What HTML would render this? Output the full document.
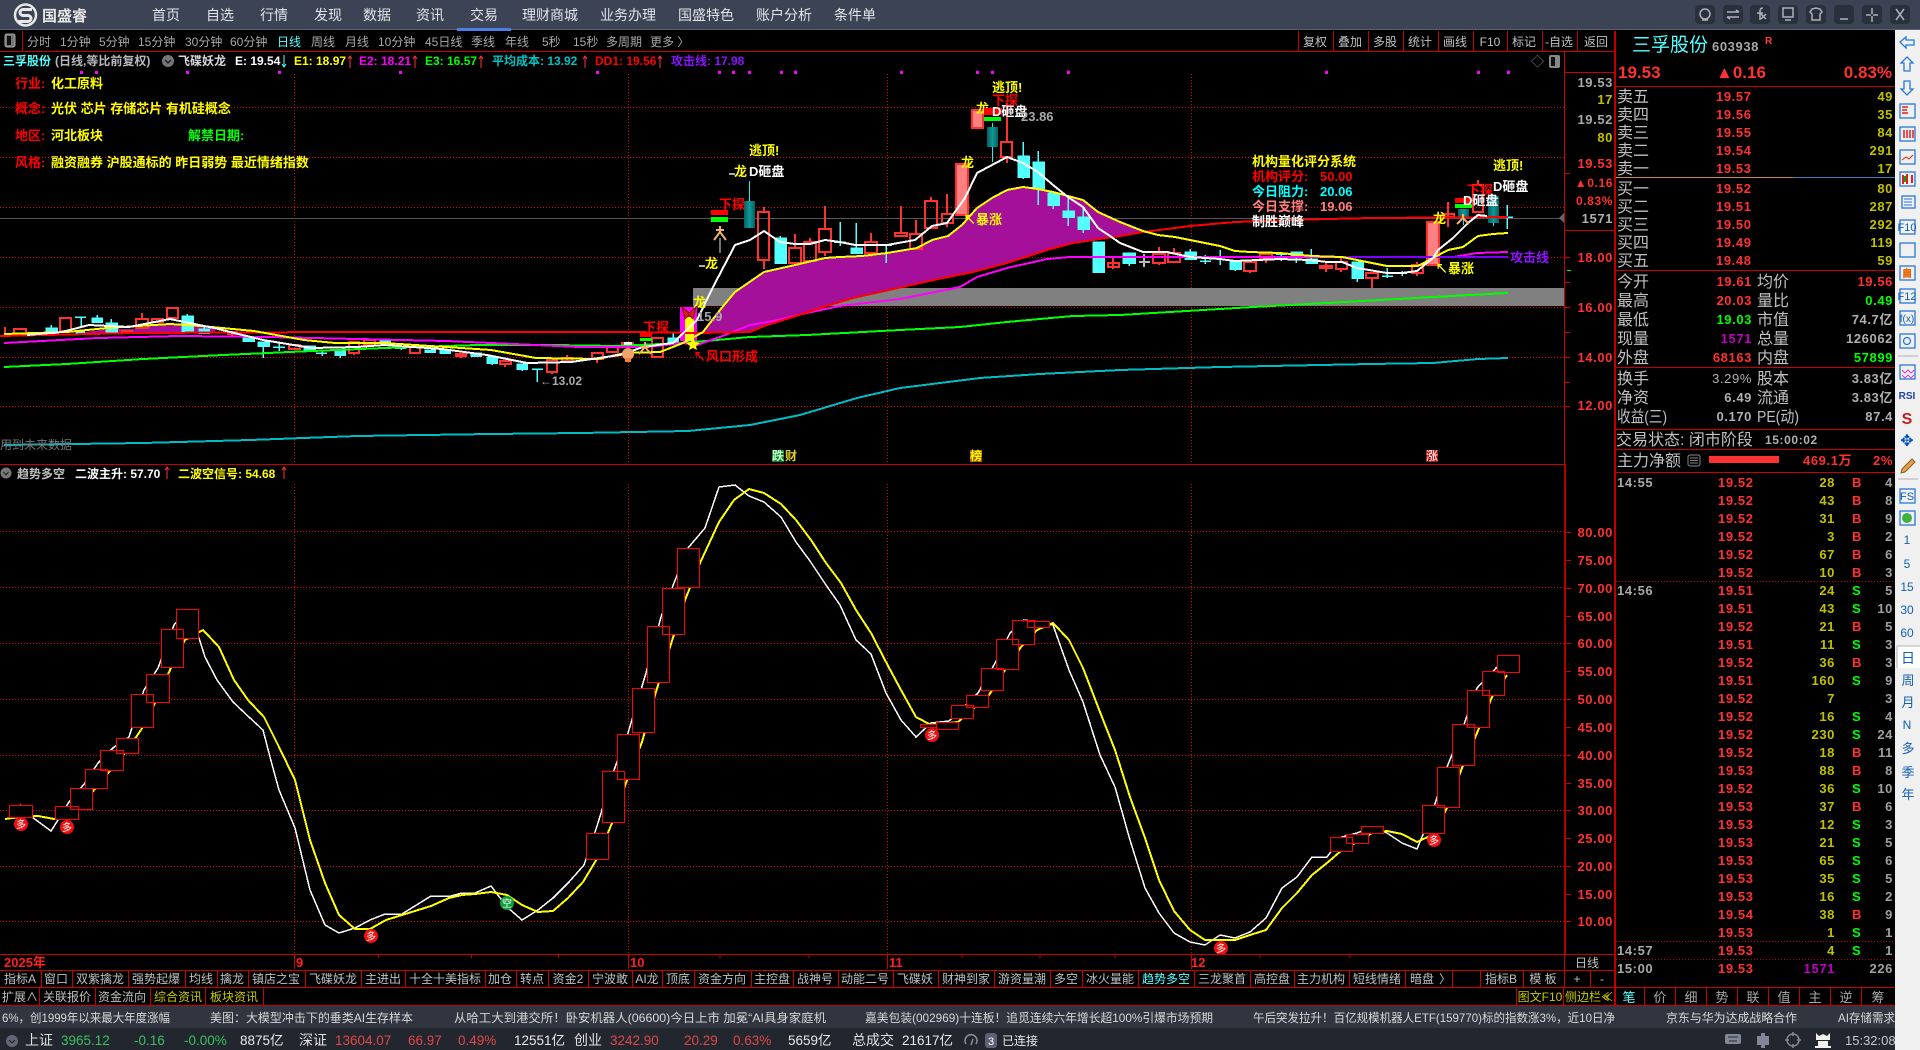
<!DOCTYPE html>
<html lang="zh-CN"><head><meta charset="utf-8"><title>国盛睿</title>
<style>
html,body{margin:0;padding:0;background:#000;width:1920px;height:1050px;overflow:hidden}
svg{display:block}
text{font-family:"Liberation Sans","WenQuanYi Zen Hei","Noto Sans CJK SC",sans-serif;font-size:12px;white-space:pre}
.d text,text.d{font-size:13px;font-weight:bold;letter-spacing:.6px}
.l text{font-size:16px;fill:#c0c0c0}
.b text,text.b{font-weight:bold}
.m text{text-anchor:middle}
.e text{text-anchor:end}
.tag text{font-size:13px;font-weight:bold}
</style></head><body>
<svg xmlns="http://www.w3.org/2000/svg" width="1920" height="1050" viewBox="0 0 1920 1050">
<rect width="1920" height="1050" fill="#000"/>

<!-- title bar -->
<rect width="1920" height="30" fill="#3c4354"/>
<rect y="29" width="1920" height="1" fill="#59606f"/>
<rect x="457" y="28" width="54" height="3" fill="#4d7fe8"/>
<g fill="none" stroke="#e8e8e8"><circle cx="25.5" cy="15" r="10.5" stroke-width="2.5"/><path d="M32 9.5H23a3 3 0 0 0 0 6h5a3 3 0 0 1 0 6H18" stroke-width="3"/></g>
<text x="42" y="21" font-weight="bold" style="font-size:15px" fill="#e8e8e8">国盛睿</text>
<g fill="#e2e4e8" style="font-size:14px">
<text x="152" y="20" style="font-size:14px">首页</text><text x="206" y="20" style="font-size:14px">自选</text><text x="260" y="20" style="font-size:14px">行情</text><text x="314" y="20" style="font-size:14px">发现</text><text x="363" y="20" style="font-size:14px">数据</text><text x="416" y="20" style="font-size:14px">资讯</text><text x="470" y="20" style="font-size:14px">交易</text><text x="522" y="20" style="font-size:14px">理财商城</text><text x="600" y="20" style="font-size:14px">业务办理</text><text x="678" y="20" style="font-size:14px">国盛特色</text><text x="756" y="20" style="font-size:14px">账户分析</text><text x="834" y="20" style="font-size:14px">条件单</text>
</g>
<!-- window buttons -->
<g fill="#2a303c"><rect x="1695" y="5" width="20" height="19" rx="4"/><rect x="1723" y="5" width="20" height="19" rx="4"/><rect x="1750" y="5" width="20" height="19" rx="4"/><rect x="1778" y="5" width="20" height="19" rx="4"/><rect x="1806" y="5" width="20" height="19" rx="4"/><rect x="1834" y="5" width="20" height="19" rx="4"/><rect x="1862" y="5" width="20" height="19" rx="4"/><rect x="1890" y="5" width="20" height="19" rx="4"/></g>
<g fill="none" stroke="#aab0bc" stroke-width="1.5">
<circle cx="1705" cy="14" r="5"/><path d="M1702 20h6"/>
<path d="M1727 12h12M1736 10l3 2M1739 17h-12M1730 19l-3-2"/>
<path d="M1763 8c-3 0-3 2-3 4v8M1757 13h6M1761 14l5 5M1766 14l-5 5"/>
<rect x="1783" y="8" width="10" height="9"/><path d="M1785 20h6"/>
<path d="M1812 9l4-1 4 1 2 3-2 2v6h-8v-6l-2-2z"/>
<path d="M1840 19h8"/>
<path d="M1872 8v6M1872 16v6M1866 15h5M1873 15h5"/>
<path d="M1896 9l8 11M1904 9l-8 11"/>
</g>

<!-- period toolbar -->
<rect x="5" y="34" width="10" height="13" rx="2" fill="#777" stroke="#aaa"/><rect x="7" y="36" width="4" height="9" fill="#111"/>
<rect x="22" y="31" width="1" height="20" fill="#c80000"/>
<g fill="#a8a8a8">
<text x="27" y="46">分时</text><text x="60" y="46">1分钟</text><text x="99" y="46">5分钟</text><text x="138" y="46">15分钟</text><text x="185" y="46">30分钟</text><text x="230" y="46">60分钟</text><text x="277" y="46" fill="#54ffff">日线</text><text x="311" y="46">周线</text><text x="345" y="46">月线</text><text x="378" y="46">10分钟</text><text x="425" y="46">45日线</text><text x="471" y="46">季线</text><text x="505" y="46">年线</text><text x="542" y="46">5秒</text><text x="573" y="46">15秒</text><text x="606" y="46">多周期</text><text x="650" y="46">更多 〉</text>
</g>
<g fill="#c0c0c0" class="m"><text x="1315" y="46">复权</text><text x="1350" y="46">叠加</text><text x="1385" y="46">多股</text><text x="1420" y="46">统计</text><text x="1455" y="46">画线</text><text x="1490" y="46">F10</text><text x="1524" y="46">标记</text><text x="1559" y="46">-自选</text><text x="1596" y="46">返回</text></g>
<path d="M1298.5 31V51M1333.5 31V51M1368.5 31V51M1403.5 31V51M1438.5 31V51M1473.5 31V51M1507.5 31V51M1542.5 31V51M1577.5 31V51" stroke="#c80000" shape-rendering="crispEdges"/>
<rect y="51" width="1615" height="1" fill="#c80000"/>

<!-- info row -->
<g style="font-size:12px">
<text x="3" y="65" fill="#54ffff" font-weight="bold">三孚股份</text><text x="55" y="65" fill="#b8b8b8" font-weight="bold">(日线,等比前复权)</text>
<circle cx="168" cy="61" r="6" fill="#777"/><path d="M165 60l3 3 3-3" stroke="#222" stroke-width="1.5" fill="none"/>
<text x="178" y="65" fill="#d8d8d8" font-weight="bold">飞碟妖龙</text>
<text x="235" y="65" fill="#fff" font-weight="bold">E: 19.54</text><path d="M284 55v11M282 64l2 3 2-3" stroke="#54ffff" fill="none"/>
<text x="294" y="65" fill="#ff0" font-weight="bold">E1: 18.97</text><path d="M350 68V56M348 59l2-3 2 3" stroke="#ff3232" fill="none"/>
<text x="359" y="65" fill="#f0f" font-weight="bold">E2: 18.21</text><path d="M415 68V56M413 59l2-3 2 3" stroke="#ff3232" fill="none"/>
<text x="425" y="65" fill="#0f0" font-weight="bold">E3: 16.57</text><path d="M481 68V56M479 59l2-3 2 3" stroke="#ff3232" fill="none"/>
<text x="492" y="65" fill="#00c4c4" font-weight="bold">平均成本: 13.92</text><path d="M585 68V56M583 59l2-3 2 3" stroke="#ff3232" fill="none"/>
<text x="595" y="65" fill="#f00" font-weight="bold">DD1: 19.56</text><path d="M660 68V56M658 59l2-3 2 3" stroke="#ff3232" fill="none"/>
<text x="671" y="65" fill="#8a14ff" font-weight="bold">攻击线: 17.98</text>
</g>
<text x="1531" y="66" fill="#888" style="font-size:13px">◇</text>
<rect x="1549" y="55" width="11" height="13" rx="2" fill="#888"/><rect x="1551" y="57" width="4" height="9" fill="#111"/>
<!-- magenta marks -->
<path d="M80 71h3v3h-3zM95 71h3v3h-3zM186 71h3v3h-3zM278 71h3v3h-3zM399 71h3v3h-3zM596 71h3v3h-3zM718 71h3v3h-3zM732 71h3v3h-3zM748 71h3v3h-3zM780 71h3v3h-3zM794 71h3v3h-3zM900 71h3v3h-3zM976 71h3v3h-3zM991 71h3v3h-3zM1067 71h3v3h-3zM1325 71h3v3h-3zM1477 71h3v3h-3zM1507 71h3v3h-3z" fill="#f0f"/>

<!-- grid -->
<g stroke="#e00000" stroke-dasharray="1 2" shape-rendering="crispEdges">
<path d="M0 107.5H1564M0 157.5H1564M0 207.5H1564M0 257.5H1564M0 307.5H1564M0 357.5H1564M0 406.5H1564"/>
<path d="M294.5 74V464M628.5 74V464M887.5 74V464M1191.5 74V464"/>
<path d="M0 531.5H1564M0 587.5H1564M0 643.5H1564M0 699.5H1564M0 755.5H1564M0 810.5H1564M0 866.5H1564M0 921.5H1564"/>
<path d="M294.5 484V954M628.5 484V954M887.5 484V954M1191.5 484V954"/>
</g>

<!-- band and gray line -->
<rect x="693" y="288" width="871" height="18" fill="#808080"/>
<rect x="0" y="218" width="1560" height="1" fill="#555"/>
<path d="M1564 213l-5 5 5 5z" fill="#666"/>

<!-- purple fills -->
<polygon fill="#a4109a" points="703,332 720,310 735,292 764,272 795,265 825,258 840,257 862,256 887,253 917,248 932,240 948,236 962,225 977,208 992,198 1007,190 1023,187 1038,189 1053,192 1068,196 1083,200 1098,212 1120,221 1147,232 1120,236 1073,243 1047,250 1007,263 973,272 943,278 898,288 853,298 823,307 793,317 767,325 750,332"/>
<polygon fill="#a4109a" points="71,334 107,329 135,329 170,323 201,326 215,329 215,333"/>

<!-- candles red hollow -->
<path fill="none" stroke="#ff3232" stroke-width="2" shape-rendering="crispEdges" d="M5 327V337M14 329H26V334H14ZM60 318H71V331H60ZM136 319H148V328H136ZM142 313V319M152 319H163V322H152ZM167 308H178V318H167ZM228 332H237V334H228ZM232 334V337M289 345H300V349H289ZM349 342H359V353H349ZM354 353V355M364 340H375V345H364ZM410 347H420V353H410ZM456 354H466V356H456ZM461 356V358M500 361H511V364H500ZM505 364V367M547 360H557V372H547ZM552 372V374M562 358H572V361H562ZM567 355V363M592 353H603V359H592ZM597 359V363M607 347H618V352H607ZM652 338H663V357H652Z
M758 212H769V260H758ZM764 207V212M764 260V269M789 248H801V263H789ZM795 234V248M804 242H816V261H804ZM810 238V242M819 229H831V252H819ZM825 206V229M825 252V256M865 242H877V253H865ZM871 233V242M871 253V257M895 233H907V236H895ZM901 206V233M910 234H922V249H910ZM916 220V234M925 201H937V228H925ZM931 197V201M942 214H953V223H942ZM947 194V214M947 223V227M1001 142H1012V157H1001ZM1007 103V142M1007 157V163M1108 263H1119V267H1108ZM1113 258V269
M1153 254H1165V263H1153ZM1159 247V254M1159 263V265M1168 253H1180V262H1168ZM1174 248V253M1244 262H1256V271H1244ZM1250 271V273M1260 254H1272V258H1260ZM1266 258V263M1320 266H1332V268H1320ZM1326 262V272M1336 262H1347V269H1336ZM1341 257V262M1341 269V272M1366 273H1378V278H1366ZM1372 278V288M1412 265H1423V273H1412ZM1417 262V265M1417 273V276M1443 214H1454V217H1443ZM1448 202V227M1473 185H1483V212H1473ZM1478 180V185"/>
<path fill="#ff3232" d="M121 330h12v4h-12zM621 342h13v4h-13z"/>
<!-- salmon -->
<g fill="#ff8080" stroke="#ff3232" stroke-width="2" shape-rendering="crispEdges"><rect x="956" y="164" width="12" height="51"/><rect x="972" y="110" width="11" height="18"/><rect x="1427" y="222" width="12" height="43"/></g>
<!-- cyan candles -->
<path fill="#54ffff" stroke="#54ffff" stroke-width="1.5" shape-rendering="crispEdges" d="M46 328h11v5h-11zM51 325v8M76 331h8v2h-8zM81 317V327M75 317h11M92 318h10v4h-10zM97 315v8M106 323h11v10h-11zM111 319v4M182 316h11v16h-11zM187 314v2M199 329h10v4h-10zM204 327v2M243 337h11v4h-11zM258 342h11v4h-11zM263 346V358M273 347h12M279 343V351M304 346h11v4h-11zM316 353h11M322 350V356M335 350h10v5h-10zM340 355V358M380 340h10v3h-10zM395 348h11M401 346V350M425 350h10v2h-10zM440 350h10v3h-10zM471 353h10v3h-10zM487 357h10v6h-10zM492 363V365M517 364h10v5h-10zM522 369V371M532 369h11M537 369V382M673 333V343M668 338h10v5h-10z
M775 238h11v25h-11zM780 236v2M840 222V246M834 242h12M851 248h11v5h-11zM856 223V248M881 245h11M886 245V263M1018 156h11v21h-11zM1023 142V156M1023 177V179M1033 162h11v26h-11zM1038 151V162M1038 188V205M1048 193h11v12h-11zM1053 205V209M1063 211h11v6h-11zM1068 198V211M1068 217V226M1078 217h11v12h-11zM1083 207V217M1083 229V233M1093 242h11v30h-11zM1098 272V273
M1123 253h12v10h-12zM1129 263V266M1185 252h11v7h-11zM1190 249V259M1200 261h11M1205 255V264M1215 257h10M1220 250V265M1230 262h11v7h-11zM1235 269V271M1276 254h11M1281 252V261M1291 252h11v5h-11zM1296 257V263M1306 259h11v4h-11zM1311 249V259M1352 262h11v16h-11zM1357 278V282M1382 276h11M1387 268V278M1397 273h10M1402 271V276M1502 217h11M1507 205V229"/>
<path stroke="#b8b8b8" stroke-width="2" d="M1139 262h11M1144 254v13" fill="none" shape-rendering="crispEdges"/>
<!-- teal -->
<defs><linearGradient id="t" x1="0" x2="1"><stop offset="0" stop-color="#0a5f5f"/><stop offset=".5" stop-color="#0f9a9a"/><stop offset="1" stop-color="#0a5f5f"/></linearGradient></defs>
<g fill="url(#t)"><rect x="744" y="201" width="11" height="27"/><rect x="987" y="127" width="11" height="20"/><rect x="1458" y="209" width="11" height="8"/><rect x="1488" y="196" width="11" height="27"/></g>
<path stroke="#2ee" stroke-width="1" d="M749.5 181V201M992.5 123V127M992.5 147V162M1463.5 217V225M1493.5 223V226" shape-rendering="crispEdges"/>
<!-- big signal bar -->
<rect x="680" y="307" width="17" height="34" fill="#f0f"/><rect x="685" y="317" width="9" height="24" fill="#ff0"/>

<!-- upper lines -->
<g fill="none" stroke-width="2" shape-rendering="crispEdges">
<polyline stroke="#00bcc4" points="4,445 143,443 250,440 357,436 491,434 580,433 688,431 750,425 800,415 857,398 900,388 980,378 1040,374 1120,370 1220,367 1370,364 1433,363 1478,359 1508,358"/>
<polyline stroke="#0f0" points="4,367 67,364 143,359 223,355 312,351 384,348 478,345 553,345 616,346 683,343 750,337 807,335 900,330 960,327 1007,322 1073,316 1120,315 1253,307 1327,303 1433,297 1508,293"/>
<polyline stroke="#f0f" points="4,343 98,338 179,336 268,337 446,341 491,343 580,347 647,347 683,343 697,345 720,337 750,325 773,321 807,313 840,306 900,299 960,287 977,277 1007,268 1047,259 1070,257 1120,257 1453,257 1477,253 1508,252"/>
<polyline stroke="#f00" points="0,336 134,333 339,332 629,332 697,333 750,332 767,325 793,317 823,307 853,298 898,288 943,278 973,272 1007,263 1047,250 1073,243 1120,236 1143,232 1167,229 1190,226 1235,222 1327,219 1373,218 1508,217"/>
<polyline stroke="#8000ff" points="1340,257 1508,257"/>
<polyline stroke="#ff0" points="4,334 67,332 107,328 170,324 201,326 254,331 304,340 335,343 384,343 446,347 491,350 536,358 598,359 625,353 660,352 683,343 703,332 720,310 735,292 764,272 795,265 825,258 840,257 862,256 887,253 917,248 932,240 948,236 962,225 977,208 992,198 1007,190 1023,187 1038,189 1053,192 1068,196 1083,200 1098,212 1120,222 1143,231 1158,235 1175,237 1220,246 1235,251 1250,252 1280,253 1312,256 1342,257 1372,263 1387,266 1418,266 1433,258 1448,250 1463,247 1478,236 1493,234 1508,233"/>
<polyline stroke="#fff" points="27,335 62,332 89,325 129,327 170,319 214,328 263,340 312,348 357,347 384,345 442,349 487,355 527,363 571,362 620,355 643,347 673,343 697,320 713,287 735,245 750,240 764,231 780,242 795,244 810,244 825,240 840,242 855,245 887,245 915,240 932,226 947,223 965,198 977,173 992,165 1007,157 1023,163 1038,172 1053,185 1068,197 1083,207 1098,228 1110,236 1120,243 1143,252 1167,252 1190,257 1220,259 1235,261 1280,259 1310,260 1327,262 1342,262 1357,268 1387,273 1402,273 1417,271 1433,258 1438,250 1453,238 1468,223 1478,215 1487,216"/>
</g>

<!-- upper annotations -->
<g class="tag">
<text x="15" y="88" fill="#f00">行业:</text><text x="51" y="88" fill="#ff0">化工原料</text>
<text x="15" y="113" fill="#f00">概念:</text><text x="51" y="113" fill="#ff0">光伏 芯片 存储芯片 有机硅概念</text>
<text x="15" y="140" fill="#f00">地区:</text><text x="51" y="140" fill="#ff0">河北板块</text><text x="188" y="140" fill="#0f0">解禁日期:</text>
<text x="15" y="167" fill="#f00">风格:</text><text x="51" y="167" fill="#ff0">融资融券 沪股通标的 昨日弱势 最近情绪指数</text>

<text x="749" y="155" fill="#ff0">逃顶!</text><text x="992" y="92" fill="#ff0">逃顶!</text><text x="1493" y="170" fill="#ff0">逃顶!</text>
<text x="734" y="176" fill="#ff0">龙</text><text x="705" y="268" fill="#ff0">龙</text><text x="693" y="307" fill="#ff0">龙</text><text x="976" y="113" fill="#ff0">龙</text><text x="961" y="167" fill="#ff0">龙</text><text x="1433" y="223" fill="#ff0">龙</text>
<text x="719" y="209" fill="#f00">下探</text><text x="643" y="332" fill="#f00">下探</text><text x="992" y="105" fill="#f00">下探</text><text x="1467" y="195" fill="#f00">下探</text>
</g>
<path d="M729 174h6M699 266h6" stroke="#aaa" stroke-width="2"/>
<g fill="#f00"><rect x="711" y="210" width="17" height="5"/><rect x="640" y="332" width="12" height="5"/><rect x="984" y="108" width="18" height="7"/><rect x="1455" y="198" width="17" height="5"/></g>
<g fill="#0f0"><rect x="711" y="217" width="17" height="5"/><rect x="640" y="338" width="12" height="3"/><rect x="984" y="117" width="17" height="4"/><rect x="1455" y="204" width="17" height="4"/></g>
<g class="tag">
<text x="749" y="176" fill="#fff">D砸盘</text><text x="992" y="116" fill="#fff">D砸盘</text><text x="1493" y="191" fill="#fff">D砸盘</text><text x="1463" y="205" fill="#fff">D砸盘</text>
<text x="1021" y="121" fill="#aaa">23.86</text><text x="697" y="321" fill="#aaa">15.9</text><text x="540" y="385" fill="#aaa" style="font-size:12px">←13.02</text>
<text x="693" y="361" fill="#f00">↖风口形成</text>
<text x="963" y="224" fill="#ff0">↖暴涨</text><text x="1435" y="273" fill="#ff0">↖暴涨</text>
<text x="1252" y="166" fill="#ff0">机构量化评分系统</text>
<text x="1252" y="181" fill="#f00">机构评分:</text><text x="1320" y="181" fill="#f00">50.00</text>
<text x="1252" y="196" fill="#0ff">今日阻力:</text><text x="1320" y="196" fill="#0ff">20.06</text>
<text x="1252" y="211" fill="#ff8080">今日支撑:</text><text x="1320" y="211" fill="#ff8080">19.06</text>
<text x="1252" y="226" fill="#fff">制胜巅峰</text>
<text x="1510" y="262" fill="#8a14ff">攻击线</text>
</g>
<text x="0" y="449" fill="#777">用到未来数据</text>
<!-- persons, butterfly, star, bag -->
<g fill="none" stroke="#f0b070" stroke-width="2"><path d="M720 226v6M714 240l6-8 6 8M716 230h8"/><path d="M645 342v6M639 354l6-7 6 7M641 347h8"/><path d="M1463 214v5M1457 224l6-6 6 6"/></g>
<path d="M720 238v15" stroke="#999" stroke-width="1.5"/>
<path d="M682 307l7 6 7-6-3 12-4-4-4 4z" fill="#d02020" stroke="#801010"/>
<polygon points="693,337 695,342 700,343 696,346 697,350 693,348 689,350 690,346 686,343 691,342" fill="#ff0"/>
<circle cx="628" cy="354" r="6" fill="#f2a468"/><rect x="624" y="342" width="8" height="3" fill="#fff"/><rect x="625" y="358" width="6" height="4" fill="#f2803a"/>
<!-- upper bottom tags -->
<g class="b"><rect x="772" y="450" width="12" height="12" fill="#0a7a2a"/><text x="772" y="460" fill="#cfc">跌</text><text x="785" y="460" fill="#ddd020">财</text><rect x="970" y="450" width="12" height="12" fill="#b05a00"/><text x="970" y="460" fill="#ff0">榜</text><rect x="1426" y="450" width="12" height="12" fill="#a01010"/><text x="1426" y="460" fill="#fcc">涨</text></g>

<!-- axis -->
<rect x="1564" y="52" width="1" height="412" fill="#c80000"/><rect x="1564" y="464" width="2" height="490" fill="#b00000"/>
<rect x="1564" y="72" width="51" height="1" fill="#c80000"/><rect x="1564" y="230" width="51" height="1" fill="#c80000"/>
<path d="M1565 173.500h5M1565 257.500h5M1565 282.500h5M1565 307.500h5M1565 332.500h5M1565 357.500h5M1565 382.500h5M1565 406.500h5" stroke="#c80000" shape-rendering="crispEdges"/>
<path d="M1567 270.500h4" stroke="#0f0" shape-rendering="crispEdges"/>
<g class="d e">
<text x="1613" y="87" fill="#a8a8a8">19.53</text><text x="1613" y="104" fill="#c0c000">17</text><text x="1613" y="124" fill="#a8a8a8">19.52</text><text x="1613" y="142" fill="#c0c000">80</text><text x="1613" y="168" fill="#ff3232">19.53</text><text x="1613" y="187" fill="#ff3232" style="font-size:12px">▲0.16</text><text x="1613" y="205" fill="#ff3232" style="font-size:12px">0.83%</text><text x="1613" y="223" fill="#b0b0b0">1571</text>
<text x="1613" y="262" fill="#ff3232">18.00</text><text x="1613" y="312" fill="#ff3232">16.00</text><text x="1613" y="362" fill="#ff3232">14.00</text><text x="1613" y="410" fill="#ff3232">12.00</text>
</g>
<g class="d e">
<text x="1613" y="926" fill="#ff3232">10.00</text><text x="1613" y="899" fill="#ff3232">15.00</text><text x="1613" y="871" fill="#ff3232">20.00</text><text x="1613" y="843" fill="#ff3232">25.00</text><text x="1613" y="815" fill="#ff3232">30.00</text><text x="1613" y="788" fill="#ff3232">35.00</text><text x="1613" y="760" fill="#ff3232">40.00</text><text x="1613" y="732" fill="#ff3232">45.00</text><text x="1613" y="704" fill="#ff3232">50.00</text><text x="1613" y="676" fill="#ff3232">55.00</text><text x="1613" y="648" fill="#ff3232">60.00</text><text x="1613" y="621" fill="#ff3232">65.00</text><text x="1613" y="593" fill="#ff3232">70.00</text><text x="1613" y="565" fill="#ff3232">75.00</text><text x="1613" y="537" fill="#ff3232">80.00</text>
</g>
<path d="M1566 921.500h5M1566 894.500h5M1566 866.500h5M1566 838.500h5M1566 810.500h5M1566 783.500h5M1566 755.500h5M1566 727.500h5M1566 699.500h5M1566 671.500h5M1566 643.500h5M1566 616.500h5M1566 588.500h5M1566 560.500h5M1566 532.500h5" stroke="#c80000" shape-rendering="crispEdges"/>

<!-- lower pane header -->
<rect y="464" width="1564" height="1" fill="#c80000"/>
<circle cx="6" cy="473" r="5.500" fill="#777"/><path d="M3.500 472l2.500 3 2.500-3" stroke="#222" fill="none"/>
<text x="17" y="478" fill="#c0c0c0" font-weight="bold">趋势多空</text>
<text x="75" y="478" fill="#fff" font-weight="bold">二波主升: 57.70</text><path d="M167 479V467M165 470l2-3 2 3" stroke="#ff3232" fill="none"/>
<text x="178" y="478" fill="#ff0" font-weight="bold">二波空信号: 54.68</text><path d="M284 479V467M282 470l2-3 2 3" stroke="#ff3232" fill="none"/>

<!-- lower lines -->
<g fill="none" shape-rendering="crispEdges">
<polyline stroke="#fff" stroke-width="1.5" points="20,805 32,817 51,831 58,820 69,802 85,783 98,763 114,747 129,737 144,690 158,668 174,625 185,612 199,638 205,657 217,680 233,702 250,718 263,730 270,757 279,790 295,828 310,890 325,925 339,933 355,928 370,920 385,914 402,914 431,896 451,896 462,893 475,893 491,886 507,907 522,920 538,910 553,898 569,882 584,865 598,823 614,770 628,733 646,673 661,617 674,583 688,548 705,528 719,487 735,485 749,496 764,502 781,517 796,542 810,561 826,585 840,605 856,640 871,654 886,693 901,720 916,737 931,723 949,721 964,707 978,693 994,665 1010,633 1024,620 1039,622 1053,625 1069,670 1083,702 1100,755 1115,787 1130,840 1145,888 1159,913 1174,933 1190,942 1205,945 1220,935 1235,938 1250,932 1266,918 1282,888 1297,877 1312,857 1327,857 1342,837 1357,833 1372,827 1387,833 1402,843 1417,849 1432,813 1447,767 1462,730 1477,688 1497,667"/>
<polyline stroke="#ff0" stroke-width="2" points="5,819 20,817 38,816 54,819 78,810 94,790 109,772 125,753 141,730 155,703 170,670 185,640 203,630 219,647 234,680 248,700 264,717 279,747 295,780 310,840 325,883 339,915 355,929 370,929 386,920 402,915 431,906 449,898 462,895 475,894 491,892 507,895 522,905 538,912 553,911 568,898 583,882 598,857 612,823 627,780 642,742 655,695 670,647 685,600 700,563 719,522 734,500 749,489 764,493 781,504 796,520 811,540 826,563 841,583 856,610 871,633 886,662 901,690 916,717 931,725 958,722 974,708 989,695 1005,670 1021,647 1037,630 1053,623 1069,640 1083,668 1100,712 1115,750 1130,797 1145,838 1159,880 1174,911 1190,930 1205,940 1235,940 1250,935 1266,930 1282,908 1297,893 1312,875 1327,863 1342,850 1357,842 1372,833 1387,831 1402,834 1417,842 1432,835 1447,808 1462,768 1477,733 1492,697 1507,675"/>
</g>
<!-- lower boxes -->
<path fill="#000" stroke="#f00" shape-rendering="crispEdges" d="M9.500 805.500h23v12h-23zM55.500 806.500h23v13h-23zM70.500 788.500h22v21h-22zM85.500 769.500h22v19h-22zM100.500 750.500h23v20h-23zM116.500 738.500h22v15h-22zM131.500 694.500h22v33h-22zM146.500 674.500h23v28h-23zM161.500 629.500h22v38h-22zM176.500 609.500h22v29h-22zM586.500 833.500h22v26h-22zM602.500 771.500h22v51h-22zM617.500 734.500h22v45h-22zM632.500 688.500h22v44h-22zM647.500 626.500h22v56h-22zM662.500 588.500h22v46h-22zM677.500 548.500h22v39h-22zM920.500 724.500h16v3h-16zM936.500 722.500h22v7h-22zM951.500 705.500h22v13h-22zM966.500 695.500h22v12h-22zM981.500 668.500h22v22h-22zM996.500 639.500h22v30h-22zM1012.500 620.500h22v24h-22zM1027.500 621.500h22v6h-22zM1330.500 837.500h22v14h-22zM1346.500 834.500h22v9h-22zM1361.500 826.500h22v7h-22zM1422.500 805.500h22v28h-22zM1437.500 767.500h22v40h-22zM1452.500 724.500h22v41h-22zM1467.500 690.500h22v37h-22zM1482.500 671.500h22v24h-22zM1497.500 655.500h22v17h-22z"/>
<!-- lower markers -->
<g fill="#f01010"><circle cx="21" cy="824" r="7"/><circle cx="67" cy="827" r="7"/><circle cx="371" cy="936" r="7"/><circle cx="932" cy="735" r="7"/><circle cx="1221" cy="948" r="7"/><circle cx="1434" cy="840" r="7"/></g>
<circle cx="507" cy="903" r="7" fill="#10a040"/>
<g class="m" fill="#fff" style="font-size:10px"><text x="21" y="828" style="font-size:10px">多</text><text x="67" y="831" style="font-size:10px">多</text><text x="371" y="940" style="font-size:10px">多</text><text x="932" y="739" style="font-size:10px">多</text><text x="1221" y="952" style="font-size:10px">多</text><text x="1434" y="844" style="font-size:10px">多</text><text x="507" y="907" style="font-size:10px">空</text></g>

<!-- date axis -->
<rect y="954" width="1615" height="1" fill="#c80000"/><rect y="970" width="1615" height="1" fill="#c80000"/><rect y="987" width="1615" height="1" fill="#c80000"/>
<path d="M294.500 955v14M628.500 955v14M887.500 955v14M1191.500 955v14M378.500 955v3M471.500 955v3M558.500 955v3M720 955v3M809 955v3M962 955v3M1040 955v3M1115 955v3M1260 955v3M1350 955v3" stroke="#c80000" shape-rendering="crispEdges"/>
<g class="b" fill="#ff2020" style="font-size:13px"><text x="4" y="967" style="font-size:13px">2025年</text><text x="296" y="967" style="font-size:13px">9</text><text x="630" y="967" style="font-size:13px">10</text><text x="889" y="967" style="font-size:13px">11</text><text x="1191" y="967" style="font-size:13px">12</text></g>
<rect x="1564" y="954" width="1" height="33" fill="#c80000"/>
<text x="1575" y="967" fill="#c0c0c0">日线</text>

<!-- tabs row 1 -->
<path stroke="#c80000" shape-rendering="crispEdges" d="M41.500 971V987M72.500 971V987M128.500 971V987M185.500 971V987M217.500 971V987M248.500 971V987M305.500 971V987M361.500 971V987M405.500 971V987M485.500 971V987M516.500 971V987M548.500 971V987M588.500 971V987M632.500 971V987M662.500 971V987M694.500 971V987M751.500 971V987M793.500 971V987M838.500 971V987M893.500 971V987M938.500 971V987M994.500 971V987M1050.500 971V987M1082.500 971V987M1138.500 971V987M1194.500 971V987M1250.500 971V987M1294.500 971V987M1349.500 971V987M1405.500 971V987M1452.500 971V987M1480.500 971V987M1523.500 971V987M1564.500 971V987M1590.500 971V987"/>
<g class="m" fill="#c0c0c0">
<text x="20" y="983">指标A</text><text x="56" y="983">窗口</text><text x="100" y="983">双紫擒龙</text><text x="156" y="983">强势起爆</text><text x="201" y="983">均线</text><text x="232" y="983">擒龙</text><text x="276" y="983">镇店之宝</text><text x="333" y="983">飞碟妖龙</text><text x="383" y="983">主进出</text><text x="445" y="983">十全十美指标</text><text x="500" y="983">加仓</text><text x="532" y="983">转点</text><text x="568" y="983">资金2</text><text x="610" y="983">宁波敢</text><text x="647" y="983">AI龙</text><text x="678" y="983">顶底</text><text x="722" y="983">资金方向</text><text x="772" y="983">主控盘</text><text x="815" y="983">战神号</text><text x="865" y="983">动能二号</text><text x="915" y="983">飞碟妖</text><text x="966" y="983">财神到家</text><text x="1022" y="983">游资量潮</text><text x="1066" y="983">多空</text><text x="1110" y="983">冰火量能</text><text x="1166" y="983" fill="#54ffff">趋势多空</text><text x="1222" y="983">三龙聚首</text><text x="1272" y="983">高控盘</text><text x="1321" y="983">主力机构</text><text x="1377" y="983">短线情绪</text><text x="1422" y="983">暗盘</text><text x="1445" y="983">〉</text><text x="1501" y="983">指标B</text><text x="1543" y="983">模 板</text><text x="1577" y="983">+</text><text x="1602" y="983">-</text>
</g>
<!-- tabs row 2 -->
<rect y="1005" width="1895" height="1" fill="#c80000"/>
<path stroke="#c80000" shape-rendering="crispEdges" d="M39.500 988V1005M95.500 988V1005M150.500 988V1005M205.500 988V1005M263.500 988V1005M1516.500 988V1005M1563.500 988V1005"/>
<g class="m" fill="#c0c0c0"><text x="20" y="1001">扩展∧</text><text x="67" y="1001">关联报价</text><text x="122" y="1001">资金流向</text><text x="178" y="1001" fill="#c8c800">综合资讯</text><text x="234" y="1001" fill="#c8c800">板块资讯</text><text x="1540" y="1001" fill="#c8c800">图文F10</text><text x="1589" y="1001" fill="#c8c800">侧边栏≪</text></g>

<!-- right panel -->
<rect x="1614" y="31" width="2" height="974" fill="#c00000"/>
<text x="1632" y="51" fill="#54ffff" style="font-size:19px">三孚股份</text>
<text x="1712" y="51" fill="#a8a8a8" font-weight="bold" style="font-size:13px;letter-spacing:.6px">603938</text>
<text x="1765" y="44" fill="#ff4040" font-weight="bold" style="font-size:10px">R</text>
<g fill="#ff3232" font-weight="bold" style="font-size:17px"><text x="1618" y="78" style="font-size:17px;font-weight:bold">19.53</text><text x="1716" y="78" style="font-size:17px;font-weight:bold">▲0.16</text><text x="1892" y="78" text-anchor="end" style="font-size:17px;font-weight:bold">0.83%</text></g>
<g fill="#c80000"><rect x="1616" y="86" width="279" height="1"/><rect x="1616" y="270" width="279" height="1"/><rect x="1616" y="367" width="279" height="1"/><rect x="1616" y="429" width="279" height="1"/><rect x="1616" y="449" width="279" height="1"/><rect x="1616" y="472" width="279" height="1"/><rect x="1616" y="987" width="279" height="1"/></g>
<rect x="1616" y="177" width="177" height="1" fill="#c89030"/><rect x="1793" y="177" width="102" height="1" fill="#4080c0"/>
<g class="l"><text x="1617" y="102">卖五</text><text x="1617" y="120">卖四</text><text x="1617" y="138">卖三</text><text x="1617" y="156">卖二</text><text x="1617" y="174">卖一</text><text x="1617" y="194">买一</text><text x="1617" y="212">买二</text><text x="1617" y="230">买三</text><text x="1617" y="248">买四</text><text x="1617" y="266">买五</text>
<text x="1617" y="287">今开</text><text x="1617" y="306">最高</text><text x="1617" y="325">最低</text><text x="1617" y="344">现量</text><text x="1617" y="363">外盘</text><text x="1617" y="384">换手</text><text x="1617" y="403">净资</text><text x="1617" y="422" textLength="50" lengthAdjust="spacingAndGlyphs">收益(三)</text>
<text x="1757" y="287">均价</text><text x="1757" y="306">量比</text><text x="1757" y="325">市值</text><text x="1757" y="344">总量</text><text x="1757" y="363">内盘</text><text x="1757" y="384">股本</text><text x="1757" y="403">流通</text><text x="1757" y="422" textLength="42" lengthAdjust="spacingAndGlyphs">PE(动)</text>
<text x="1616" y="445">交易状态: 闭市阶段</text><text x="1617" y="466">主力净额</text></g>
<g class="d" fill="#ff3232">
<text x="1716" y="101">19.57</text><text x="1716" y="119">19.56</text><text x="1716" y="137">19.55</text><text x="1716" y="155">19.54</text><text x="1716" y="173">19.53</text><text x="1716" y="193">19.52</text><text x="1716" y="211">19.51</text><text x="1716" y="229">19.50</text><text x="1716" y="247">19.49</text><text x="1716" y="265">19.48</text>
</g>
<g class="d e" fill="#c0c000"><text x="1893" y="101">49</text><text x="1893" y="119">35</text><text x="1893" y="137">84</text><text x="1893" y="155">291</text><text x="1893" y="173">17</text><text x="1893" y="193">80</text><text x="1893" y="211">287</text><text x="1893" y="229">292</text><text x="1893" y="247">119</text><text x="1893" y="265">59</text></g>
<g class="d e"><text x="1752" y="286" fill="#ff3232">19.61</text><text x="1752" y="305" fill="#ff3232">20.03</text><text x="1752" y="324" fill="#0f0">19.03</text><text x="1752" y="343" fill="#c000c0">1571</text><text x="1752" y="362" fill="#ff3232">68163</text>
<text x="1893" y="286" fill="#ff3232">19.56</text><text x="1893" y="305" fill="#0f0">0.49</text><text x="1893" y="324" fill="#b0b0b0">74.7亿</text><text x="1893" y="343" fill="#b0b0b0">126062</text><text x="1893" y="362" fill="#0f0">57899</text>
<text x="1752" y="383" fill="#b0b0b0" style="font-weight:normal">3.29%</text><text x="1752" y="402" fill="#b0b0b0">6.49</text><text x="1752" y="421" fill="#b0b0b0">0.170</text>
<text x="1893" y="383" fill="#b0b0b0">3.83亿</text><text x="1893" y="402" fill="#b0b0b0">3.83亿</text><text x="1893" y="421" fill="#b0b0b0">87.4</text></g>
<text x="1765" y="444" class="d" fill="#b0b0b0" style="font-size:12px">15:00:02</text>
<rect x="1688" y="455" width="12" height="11" rx="2" fill="none" stroke="#888"/><path d="M1690 458h8M1690 460.500h8M1690 463h8" stroke="#888"/>
<rect x="1709" y="456" width="70" height="7" fill="#ff3232"/>
<text x="1803" y="465" class="d" fill="#ff3232">469.1万</text><text x="1893" y="465" class="d" text-anchor="end" fill="#ff3232">2%</text>

<!-- ticks -->
<path stroke="#c80000" stroke-dasharray="1 2" shape-rendering="crispEdges" d="M1616 581.500H1895M1616 941.500H1895M1616 959.500H1895"/>
<g class="d" fill="#a8a8a8"><text x="1617" y="487">14:55</text><text x="1617" y="595">14:56</text><text x="1617" y="955">14:57</text><text x="1617" y="973">15:00</text></g>
<g class="d" fill="#ff3232">
<text x="1718" y="487">19.52</text><text x="1718" y="505">19.52</text><text x="1718" y="523">19.52</text><text x="1718" y="541">19.52</text><text x="1718" y="559">19.52</text><text x="1718" y="577">19.52</text><text x="1718" y="595">19.51</text><text x="1718" y="613">19.51</text><text x="1718" y="631">19.52</text><text x="1718" y="649">19.51</text><text x="1718" y="667">19.52</text><text x="1718" y="685">19.51</text><text x="1718" y="703">19.52</text><text x="1718" y="721">19.52</text><text x="1718" y="739">19.52</text><text x="1718" y="757">19.52</text><text x="1718" y="775">19.53</text><text x="1718" y="793">19.52</text><text x="1718" y="811">19.53</text><text x="1718" y="829">19.53</text><text x="1718" y="847">19.53</text><text x="1718" y="865">19.53</text><text x="1718" y="883">19.53</text><text x="1718" y="901">19.53</text><text x="1718" y="919">19.54</text><text x="1718" y="937">19.53</text><text x="1718" y="955">19.53</text><text x="1718" y="973">19.53</text>
</g>
<g class="d e" fill="#c0c000">
<text x="1835" y="487">28</text><text x="1835" y="505">43</text><text x="1835" y="523">31</text><text x="1835" y="541">3</text><text x="1835" y="559">67</text><text x="1835" y="577">10</text><text x="1835" y="595">24</text><text x="1835" y="613">43</text><text x="1835" y="631">21</text><text x="1835" y="649">11</text><text x="1835" y="667">36</text><text x="1835" y="685">160</text><text x="1835" y="703">7</text><text x="1835" y="721">16</text><text x="1835" y="739">230</text><text x="1835" y="757">18</text><text x="1835" y="775">88</text><text x="1835" y="793">36</text><text x="1835" y="811">37</text><text x="1835" y="829">12</text><text x="1835" y="847">21</text><text x="1835" y="865">65</text><text x="1835" y="883">35</text><text x="1835" y="901">16</text><text x="1835" y="919">38</text><text x="1835" y="937">1</text><text x="1835" y="955">4</text><text x="1835" y="973" fill="#c000c0">1571</text>
</g>
<g class="d" fill="#ff3232"><text x="1852" y="487">B</text><text x="1852" y="505">B</text><text x="1852" y="523">B</text><text x="1852" y="541">B</text><text x="1852" y="559">B</text><text x="1852" y="577">B</text><text x="1852" y="631">B</text><text x="1852" y="667">B</text><text x="1852" y="757">B</text><text x="1852" y="775">B</text><text x="1852" y="811">B</text><text x="1852" y="919">B</text></g>
<g class="d" fill="#0f0"><text x="1852" y="595">S</text><text x="1852" y="613">S</text><text x="1852" y="649">S</text><text x="1852" y="685">S</text><text x="1852" y="721">S</text><text x="1852" y="739">S</text><text x="1852" y="793">S</text><text x="1852" y="829">S</text><text x="1852" y="847">S</text><text x="1852" y="865">S</text><text x="1852" y="883">S</text><text x="1852" y="901">S</text><text x="1852" y="937">S</text><text x="1852" y="955">S</text></g>
<g class="d e" fill="#a0a0a0">
<text x="1893" y="487">4</text><text x="1893" y="505">8</text><text x="1893" y="523">9</text><text x="1893" y="541">2</text><text x="1893" y="559">6</text><text x="1893" y="577">3</text><text x="1893" y="595">5</text><text x="1893" y="613">10</text><text x="1893" y="631">5</text><text x="1893" y="649">3</text><text x="1893" y="667">3</text><text x="1893" y="685">9</text><text x="1893" y="703">3</text><text x="1893" y="721">4</text><text x="1893" y="739">24</text><text x="1893" y="757">11</text><text x="1893" y="775">8</text><text x="1893" y="793">10</text><text x="1893" y="811">6</text><text x="1893" y="829">3</text><text x="1893" y="847">5</text><text x="1893" y="865">6</text><text x="1893" y="883">5</text><text x="1893" y="901">2</text><text x="1893" y="919">9</text><text x="1893" y="937">1</text><text x="1893" y="955">1</text><text x="1893" y="973">226</text>
</g>
<!-- panel tabs -->
<text x="1603" y="1001" fill="#c8c800" style="font-size:12px">«</text>
<path stroke="#c80000" shape-rendering="crispEdges" d="M1644.500 988V1005M1675.500 988V1005M1706.500 988V1005M1737.500 988V1005M1768.500 988V1005M1799.500 988V1005M1830.500 988V1005M1861.500 988V1005"/>
<g class="m" fill="#a8a8a8" style="font-size:13px"><text x="1629" y="1002" fill="#54ffff" style="font-size:13px">笔</text><text x="1660" y="1002" style="font-size:13px">价</text><text x="1691" y="1002" style="font-size:13px">细</text><text x="1722" y="1002" style="font-size:13px">势</text><text x="1753" y="1002" style="font-size:13px">联</text><text x="1784" y="1002" style="font-size:13px">值</text><text x="1815" y="1002" style="font-size:13px">主</text><text x="1846" y="1002" style="font-size:13px">逆</text><text x="1878" y="1002" style="font-size:13px">筹</text></g>

<!-- ticker -->
<rect y="1006" width="1895" height="22" fill="#30353f"/>
<g fill="#d8d8d8">
<text x="2" y="1022" textLength="168" lengthAdjust="spacingAndGlyphs">6%，创1999年以来最大年度涨幅</text>
<text x="210" y="1022" textLength="203" lengthAdjust="spacingAndGlyphs">美图：大模型冲击下的垂类AI生存样本</text>
<text x="454" y="1022" textLength="372" lengthAdjust="spacingAndGlyphs">从哈工大到港交所！卧安机器人(06600)今日上市 加冕“AI具身家庭机</text>
<text x="865" y="1022" textLength="348" lengthAdjust="spacingAndGlyphs">嘉美包装(002969)十连板！追觅连续六年增长超100%引爆市场预期</text>
<text x="1253" y="1022" textLength="362" lengthAdjust="spacingAndGlyphs">午后突发拉升！百亿规模机器人ETF(159770)标的指数涨3%，近10日净</text>
<text x="1666" y="1022" textLength="131" lengthAdjust="spacingAndGlyphs">京东与华为达成战略合作</text>
<text x="1838" y="1022" textLength="57" lengthAdjust="spacingAndGlyphs">AI存储需求</text>
</g>

<!-- status bar -->
<rect y="1028" width="1895" height="22" fill="#22262e"/>
<circle cx="12" cy="1041" r="6" fill="#606878"/><path d="M9 1040l3 3 3-3" stroke="#222" fill="none"/>
<g style="font-size:14px">
<text x="25" y="1045" fill="#e0e0e0" style="font-size:14px">上证</text>
<text x="61" y="1045" fill="#3cc060" style="font-size:13.500px">3965.12</text><text x="134" y="1045" fill="#3cc060" style="font-size:13.500px">-0.16</text><text x="184" y="1045" fill="#3cc060" style="font-size:13.500px">-0.00%</text><text x="240" y="1045" fill="#e8e8e8" style="font-size:13.500px">8875亿</text>
<text x="299" y="1045" fill="#e0e0e0" style="font-size:14px">深证</text>
<text x="335" y="1045" fill="#e04848" style="font-size:13.500px">13604.07</text><text x="408" y="1045" fill="#e04848" style="font-size:13.500px">66.97</text><text x="458" y="1045" fill="#e04848" style="font-size:13.500px">0.49%</text><text x="514" y="1045" fill="#e8e8e8" style="font-size:13.500px">12551亿</text>
<text x="574" y="1045" fill="#e0e0e0" style="font-size:14px">创业</text>
<text x="610" y="1045" fill="#e04848" style="font-size:13.500px">3242.90</text><text x="684" y="1045" fill="#e04848" style="font-size:13.500px">20.29</text><text x="733" y="1045" fill="#e04848" style="font-size:13.500px">0.63%</text><text x="788" y="1045" fill="#e8e8e8" style="font-size:13.500px">5659亿</text>
<text x="852" y="1045" fill="#e0e0e0" style="font-size:14px">总成交</text><text x="902" y="1045" fill="#e8e8e8" style="font-size:13.500px">21617亿</text>
<text x="1002" y="1045" fill="#e8e8e8" style="font-size:12px">已连接</text>
</g>
<path d="M966 1044a6 6 0 1 1 10 0M971 1045l2-6" stroke="#8890a0" stroke-width="1.500" fill="none"/>
<rect x="985" y="1033" width="12" height="15" rx="3" fill="#5a6274"/><text x="988" y="1045" fill="#fff" style="font-size:11px">3</text>
<rect x="1725" y="1034" width="16" height="10" rx="2" fill="#808898"/><path d="M1728 1037h10M1729 1041h8" stroke="#22262e"/>
<path d="M1757 1036h4v-3h4v3h4v9h-4v3h-4v-3h-4z" fill="#808898"/>
<g fill="none" stroke="#808898" stroke-width="1.500"><circle cx="1793" cy="1040" r="6"/><path d="M1793 1032v4M1793 1044v4M1785 1040h4M1797 1040h4"/></g>
<path d="M1816 1033l3 3 4-2 4 2 3-3v7h-14zM1818 1041h10v5h3v2h-16v-2h3z" fill="#f0f0f0"/>
<text x="1845" y="1045" fill="#c0c8d8" style="font-size:13px">15:32:08</text>

<!-- sidebar -->
<rect x="1895" y="30" width="25" height="1020" fill="#f0f0f0"/>
<g fill="none" stroke="#2878d8" stroke-width="1.300">
<path d="M1900 42l6-5v3h8v5h-8v3z"/><path d="M1907 57l6 6h-3v8h-6v-8h-3z"/><path d="M1904 81h6v8h3l-6 6-6-6h3z"/>
<rect x="1900" y="104" width="15" height="14"/><rect x="1900" y="127" width="15" height="14"/><rect x="1900" y="150" width="15" height="14"/><rect x="1900" y="172" width="15" height="14"/><rect x="1902" y="196" width="13" height="12"/><rect x="1900" y="220" width="15" height="14"/><rect x="1900" y="243" width="15" height="14"/><rect x="1900" y="266" width="15" height="14"/><rect x="1900" y="289" width="15" height="14"/><rect x="1900" y="311" width="15" height="14"/><rect x="1900" y="334" width="15" height="14"/><rect x="1900" y="365" width="15" height="14"/><rect x="1900" y="489" width="15" height="14"/><rect x="1900" y="511" width="15" height="14"/>
<circle cx="1907" cy="341" r="3.500"/>
</g>
<path d="M1902 107h6M1902 110h5M1902 113h6M1904 130v8M1907 130v8M1910 130v8M1913 130v8" stroke="#e02020" stroke-width="1.500"/>
<path d="M1902 160l4-3 3 2 4-4" stroke="#e02020" fill="none"/>
<path d="M1903 175v9M1907 174v10M1912 175v8" stroke="#e02020" stroke-width="2"/><path d="M1905 176v6" stroke="#0a0" stroke-width="2"/>
<path d="M1904 199h8M1904 202h8M1904 205h8" stroke="#2878d8"/>
<rect x="1904" y="269" width="7" height="8" fill="#f08020"/>
<path d="M1902 370l3 3 3-3 3 3 3-3M1902 375l3 3 3-3 3 3 3-3" stroke="#d040d0" fill="none"/>
<circle cx="1907" cy="518" r="5" fill="#40b040"/>
<g fill="#1060b0" class="m">
<text x="1907" y="231" style="font-size:11px">F10</text><text x="1907" y="277" fill="#e06010" style="font-size:11px">自</text><text x="1907" y="300" style="font-size:11px">F12</text><text x="1907" y="322" style="font-size:10px">f(x)</text><text x="1907" y="399" font-weight="bold" fill="#2040b0" style="font-size:10px">RSI</text><text x="1907" y="424" font-weight="bold" fill="#c02020" style="font-size:16px">S</text><text x="1907" y="446" fill="#0050c0" style="font-size:16px">✥</text><text x="1907" y="500" style="font-size:11px">FS</text>
</g>
<path d="M1902 469l10-10 3 3-10 10-4 1z" fill="#e8a040" stroke="#806030"/>
<path d="M1898 356h20M1898 479h20" stroke="#b0b0b0"/>
<rect x="1897" y="646" width="23" height="22" fill="#fff"/><path d="M1897 646h23M1897 646v22" stroke="#b0b0b0"/>
<g fill="#1060b0" class="m">
<text x="1907" y="544">1</text><text x="1907" y="568">5</text><text x="1907" y="591">15</text><text x="1907" y="614">30</text><text x="1907" y="637">60</text><text x="1908" y="663" style="font-size:14px">日</text><text x="1908" y="685" style="font-size:13px">周</text><text x="1908" y="707" style="font-size:13px">月</text><text x="1907" y="729">N</text><text x="1908" y="753" style="font-size:13px">多</text><text x="1908" y="777" style="font-size:13px">季</text><text x="1908" y="799" style="font-size:13px">年</text>
</g>
</svg>
</body></html>
